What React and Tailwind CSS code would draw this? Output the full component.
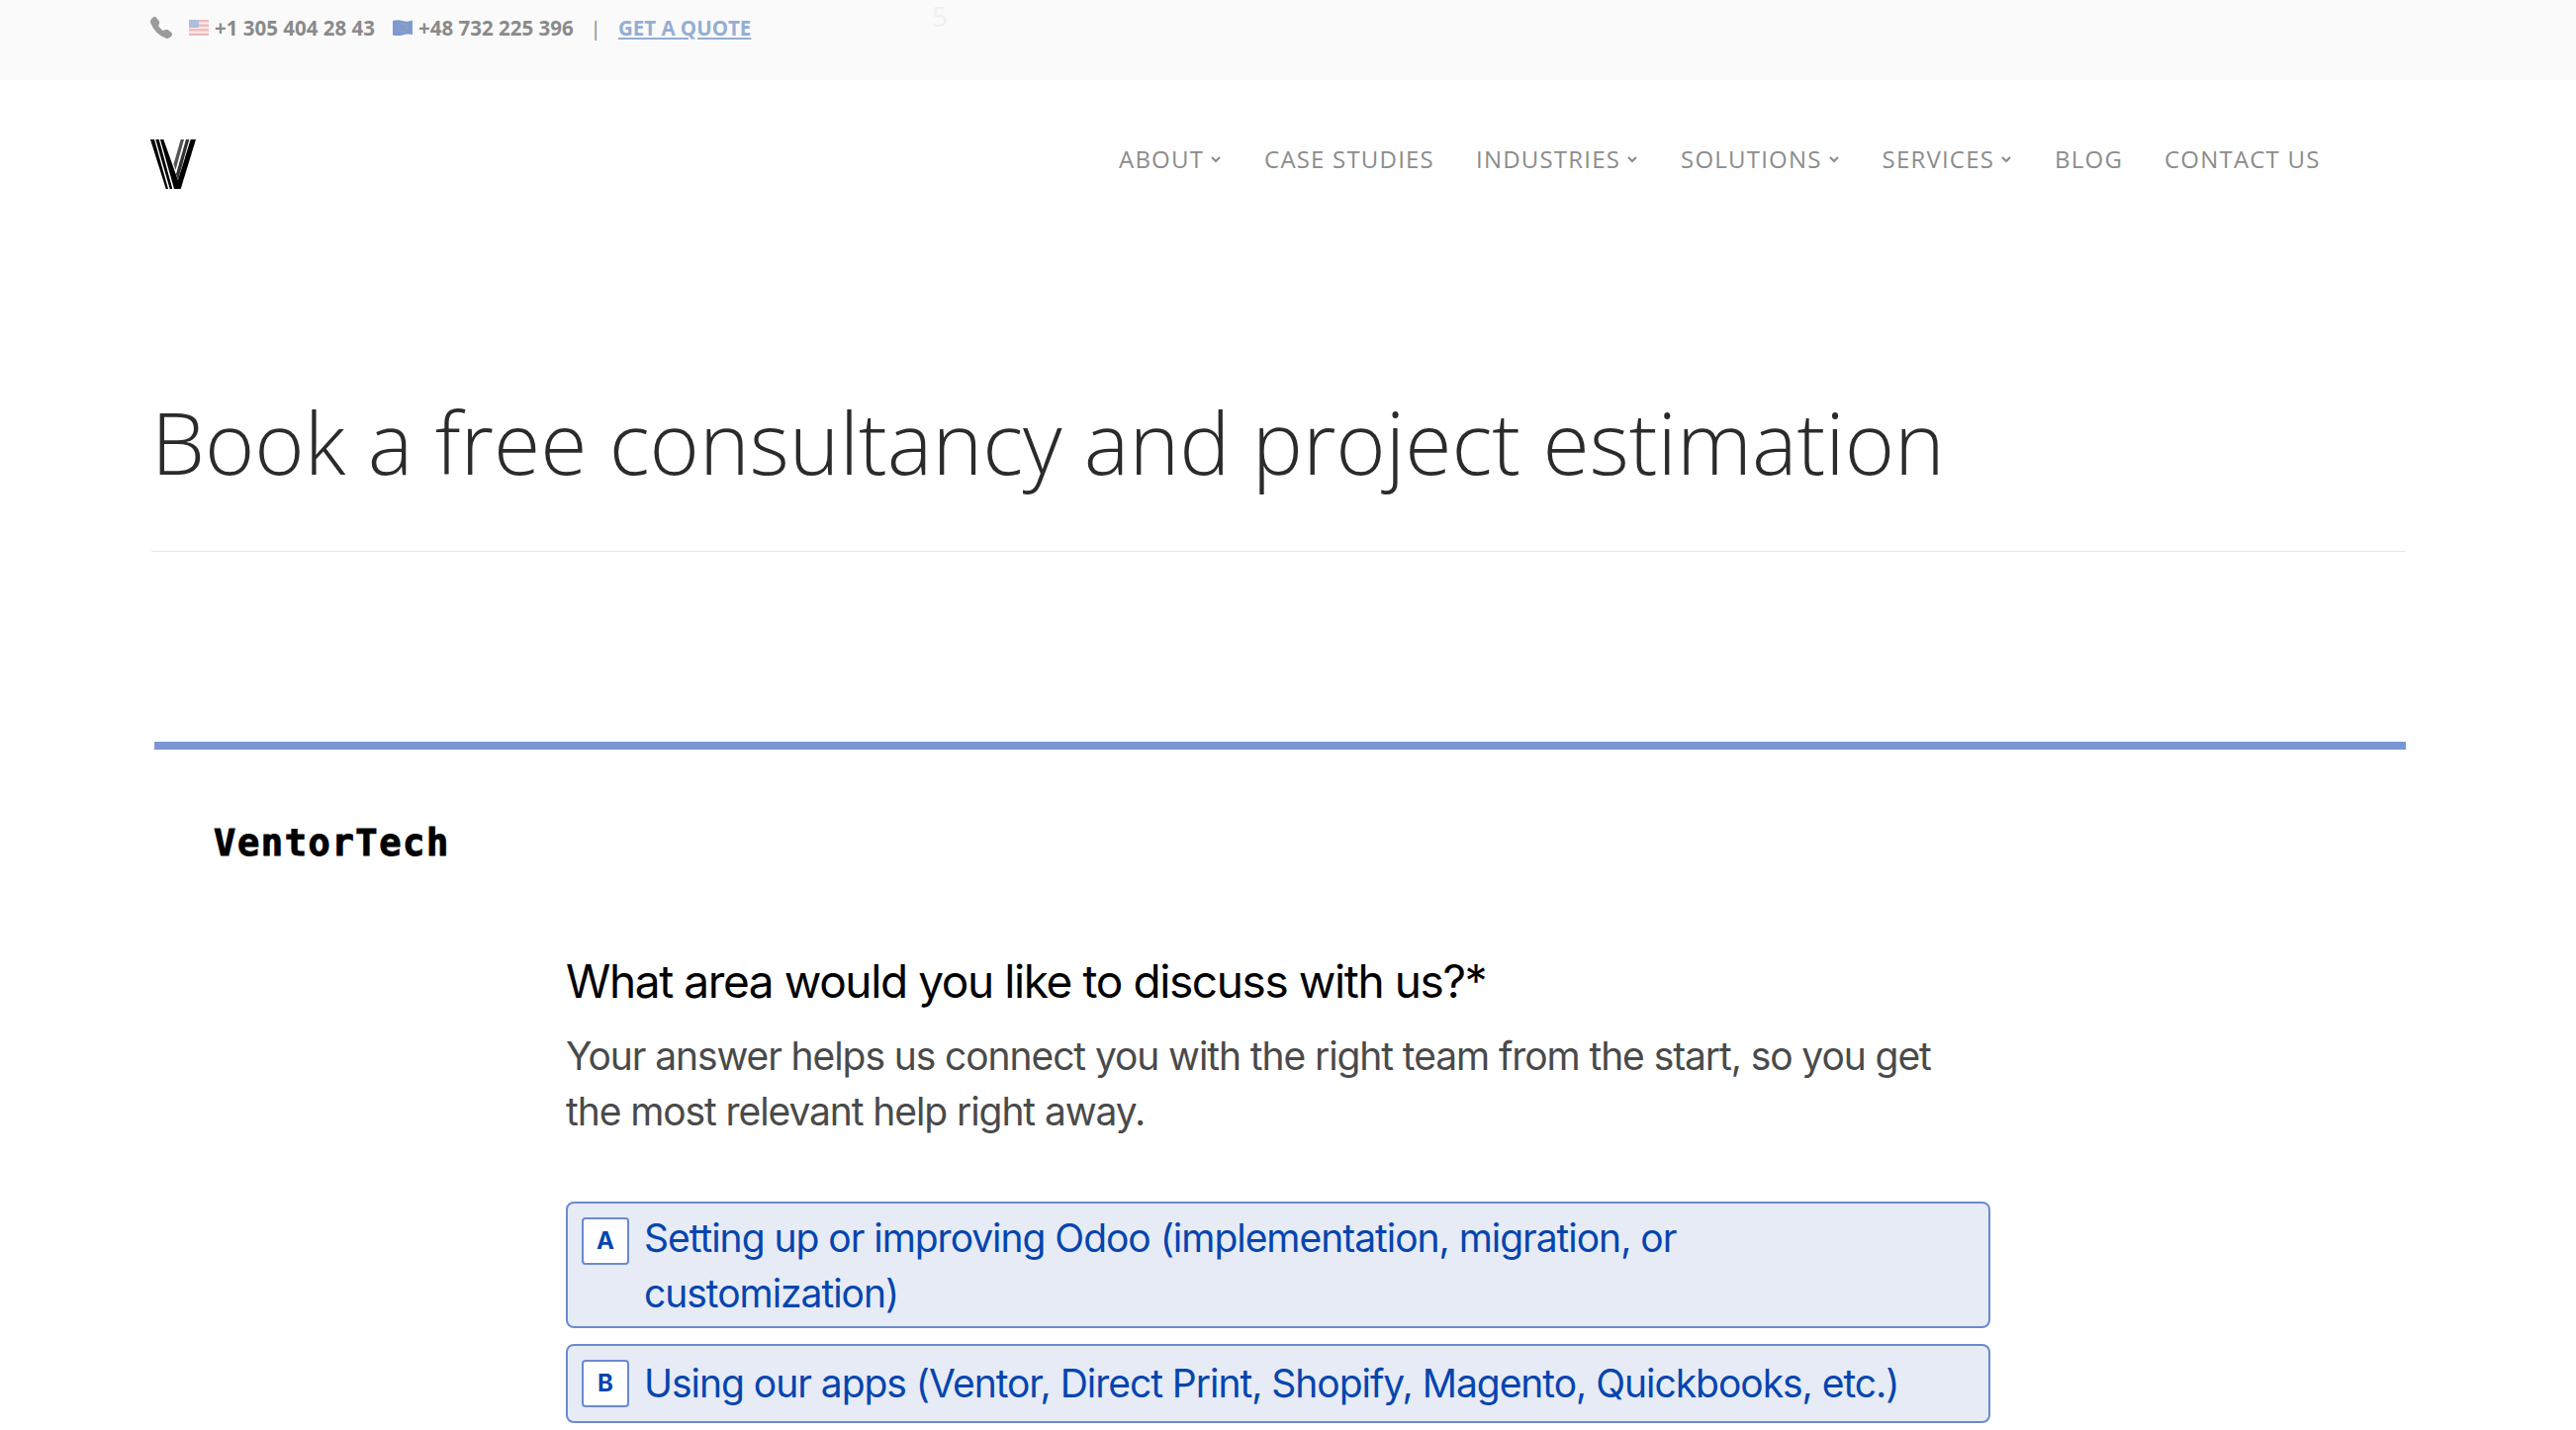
import React from "react";
import { BsTelephoneFill } from "react-icons/bs";

const open = "font-['Open_Sans',sans-serif]";
const inter = "font-['Inter',sans-serif]";

function UsFlag() {
  return (
    <svg width="20" height="16" viewBox="0 0 20 16" className="shrink-0 opacity-60">
      <rect width="20" height="16" fill="#f8dede" />
      <rect y="0" width="20" height="2.3" fill="#e58f8f" />
      <rect y="4.6" width="20" height="2.3" fill="#e58f8f" />
      <rect y="9.2" width="20" height="2.3" fill="#e58f8f" />
      <rect y="13.7" width="20" height="2.3" fill="#e58f8f" />
      <rect width="10" height="8" fill="#7d96c9" />
    </svg>
  );
}

function EuFlag() {
  return (
    <svg width="20" height="16" viewBox="0 0 20 16" className="shrink-0">
      <path d="M0 1 Q5 -0.5 10 1 T20 0.5 V15 Q15 14 10 15.5 T0 15.5 Z" fill="#7f9ad0" />
      <circle cx="10" cy="8" r="4.2" fill="none" stroke="#a9b88f" strokeWidth="1" strokeDasharray="1 1.2" />
    </svg>
  );
}

function Caret() {
  return (
    <svg width="13" height="8" viewBox="0 0 13 8" className="ml-[6px] shrink-0">
      <path d="M2 2 L6 6 L10 2" fill="none" stroke="#8a8a8a" strokeWidth="2" />
    </svg>
  );
}

function Logo() {
  return (
    <svg width="48" height="50" viewBox="0 0 48 50">
      <polygon points="0,0 4,0 18,50 15.7,50" fill="#000" />
      <polygon points="5.3,0 8.7,0 22.3,50 19.7,50" fill="#000" />
      <polygon points="10,0 13.3,0 31,50 24,50" fill="#000" />
      <polygon points="30.7,0 34,0 25.5,31 23.5,25" fill="#555" />
      <polygon points="36,0 39.3,0 28,41 26,35" fill="#333" />
      <polygon points="40.7,0 46,0 30.7,50 27,44" fill="#000" />
    </svg>
  );
}

function NavItem({ label, caret }) {
  return (
    <a className="flex items-center whitespace-nowrap">
      {label}
      {caret && <Caret />}
    </a>
  );
}

function Option({ letter, children, padding, squareTop }) {
  return (
    <div className={`flex w-[1440px] items-start gap-[15px] rounded-[8px] border-[2px] border-[#6a8acf] bg-[#e6ebf6] pl-[14px] pr-[14px] ${padding}`}>
      <div className={`flex h-[48px] w-[48px] shrink-0 items-center justify-center rounded-[4px] border-[2px] border-[#6a8acf] bg-white text-[24px] font-bold tracking-normal text-[#0445af] ${squareTop}`}>
        {letter}
      </div>
      <div className="w-[1290px] text-[39px] leading-[56px] tracking-[-1.03px] text-[#0445af]">{children}</div>
    </div>
  );
}

export default function App() {
  return (
    <div className="h-[1446px] w-full overflow-hidden bg-white">
      <div className={`relative flex h-[81px] items-start bg-[#fafafa] pl-[152px] pt-[13px] text-[20.5px] font-bold leading-[30px] text-[#8a8a8a] ${open}`}>
        <BsTelephoneFill className="mt-[4px] mr-[17px] h-[22px] w-[22px] shrink-0 text-[#9b9b9b]" />
        <span className="flex items-center gap-[6px]">
          <UsFlag />
          <span>+1 305 404 28 43</span>
        </span>
        <span className="ml-[18px] flex items-center gap-[6px]">
          <EuFlag />
          <span>+48 732 225 396</span>
        </span>
        <span className="ml-[17px] font-normal">|</span>
        <a className="ml-[17px] text-[#94aed2] underline">GET A QUOTE</a>
        <span className="absolute left-[942px] top-[0px] text-[28px] font-normal leading-[32px] text-[#f0f0f0]">5</span>
      </div>

      <div className={`flex h-[152px] items-start pl-[152px] ${open}`}>
        <div className="mt-[60px] w-[979px]">
          <Logo />
        </div>
        <nav className="mt-[61px] flex items-center gap-[42px] text-[24px] font-medium leading-[38px] tracking-[0.05em] text-[#8c8c8c]">
          <NavItem label="ABOUT" caret />
          <NavItem label="CASE STUDIES" />
          <NavItem label="INDUSTRIES" caret />
          <NavItem label="SOLUTIONS" caret />
          <NavItem label="SERVICES" caret />
          <NavItem label="BLOG" />
          <NavItem label="CONTACT US" />
        </nav>
      </div>

      <div className="ml-[153px] mr-[173px] border-b border-[#e6e6e6] pb-[50px] pt-[154px]">
        <h1 className={`text-[86px] font-light leading-[120px] text-[#2b2b2b] ${open}`}>
          Book a free consultancy and project estimation
        </h1>
      </div>

      <div className="ml-[156px] mr-[172px] mt-[192px] h-[8px] bg-[#7a96d3]" />

      <div className="ml-[216px] mt-[70px] font-['DejaVu_Sans_Mono',monospace] text-[37px] font-bold leading-[50px] tracking-[1.6px] text-black [-webkit-text-stroke:1px_black]">
        VentorTech
      </div>

      <div className={`ml-[572px] mt-[86px] w-[1440px] ${inter}`}>
        <div className="text-[46px] leading-[56px] tracking-[-1.4px] text-black">What area would you like to discuss with us?*</div>
        <div className="mt-[20px] text-[39px] leading-[56px] tracking-[-1.09px] text-[#4a4a4a]">
          Your answer helps us connect you with the right team from the start, so you get the most relevant help right away.
        </div>
        <div className="mt-[63px] flex flex-col gap-[16px]">
          <Option letter="A" padding="pt-[7px] pb-[5px]" squareTop="mt-[7px]">Setting up or improving Odoo (implementation, migration, or customization)</Option>
          <Option letter="B" padding="py-[10px]" squareTop="mt-[4px]">Using our apps (Ventor, Direct Print, Shopify, Magento, Quickbooks, etc.)</Option>
        </div>
      </div>
    </div>
  );
}
